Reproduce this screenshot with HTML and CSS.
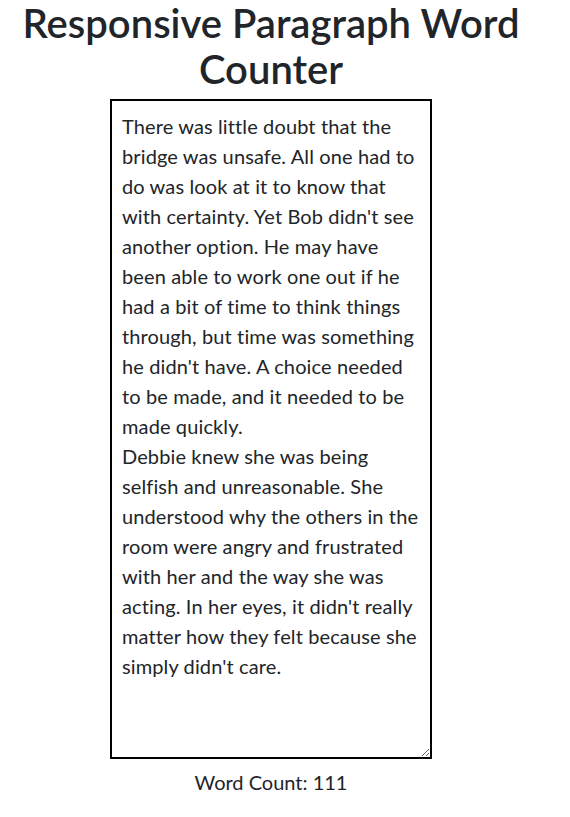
FILE: index.html
```html
<!DOCTYPE html>
<html>
<head>
<meta charset="utf-8">
<title>Responsive Paragraph Word Counter</title>
<link rel="stylesheet" href="styles.css">
</head>
<body>
<div class="container">
  <h1 class="title">Responsive Paragraph Word Counter</h1>
  <textarea class="editor">There was little doubt that the bridge was unsafe. All one had to do was look at it to know that with certainty. Yet Bob didn't see another option. He may have been able to work one out if he had a bit of time to think things through, but time was something he didn't have. A choice needed to be made, and it needed to be made quickly.
Debbie knew she was being selfish and unreasonable. She understood why the others in the room were angry and frustrated with her and the way she was acting. In her eyes, it didn't really matter how they felt because she simply didn't care.</textarea>
  <p class="count">Word Count: 111</p>
</div>
</body>
</html>
```
FILE: styles.css
```css
html, body {
  margin: 0;
  padding: 0;
  background: #fff;
}
body {
  font-family: Lato, "Liberation Sans", sans-serif;
  color: #212529;
}
.container {
  width: 542px;
  display: flex;
  flex-direction: column;
  align-items: center;
}
.title {
  margin: 0 0 7px;
  font-size: 40px;
  font-weight: 600;
  line-height: 46px;
  text-align: center;
}
.editor {
  box-sizing: border-box;
  width: 322px;
  height: 660px;
  border: 2px solid #000;
  border-radius: 0;
  padding: 10px 10px;
  margin: 0;
  font-family: Lato, "Liberation Sans", sans-serif;
  font-size: 20px;
  line-height: 30px;
  letter-spacing: 0.12px;
  color: #212529;
  background: #fff;
  outline: none;
}
.count {
  margin: 8px 0 0;
  font-size: 20px;
  line-height: 30px;
}
```
